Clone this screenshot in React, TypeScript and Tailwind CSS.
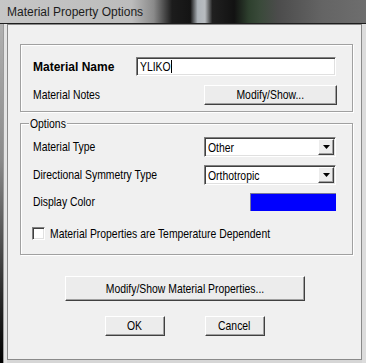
const raised =
  "bg-[#ececec] border border-t-white border-l-white border-r-[#404040] border-b-[#404040] shadow-[inset_-1px_-1px_0_#a0a0a0]";
const sunken =
  "bg-white border border-t-[#808080] border-l-[#808080] border-r-white border-b-white shadow-[inset_1px_1px_0_#404040,inset_-1px_-1px_0_#e0e0e0]";
const etched = "border border-[#a0a0a0] shadow-[1px_1px_0_#fff,inset_1px_1px_0_#fff]";

// the dialog font is a narrow one; squeeze Arial metrics to fit
function N({ children, center }: { children: React.ReactNode; center?: boolean }) {
  return (
    <span className={`inline-block whitespace-nowrap scale-x-[0.8] ${center ? "origin-center" : "origin-left"}`}>
      {children}
    </span>
  );
}

function Combo({ value }: { value: string }) {
  return (
    <div className={`${sunken} w-[132px] h-[20px] flex items-center pl-[3px] pr-[1px]`}>
      <span className="flex-1 leading-none">
        <N>{value}</N>
      </span>
      <div className={`${raised} w-[16px] h-[16px] flex items-center justify-center`}>
        <svg width="7" height="4" viewBox="0 0 7 4">
          <path d="M0 0h7L3.5 4z" fill="#000" />
        </svg>
      </div>
    </div>
  );
}

export default function App() {
  return (
    <div className="w-[366px] h-[363px] overflow-hidden flex flex-col bg-[#d6d6d6] font-['Liberation_Sans',Arial,sans-serif] text-[13px] text-black">
      {/* title bar */}
      <div className="h-[24px] shrink-0 border-b border-[#1e1e1e] flex items-center pl-[7px] bg-[linear-gradient(90deg,#c6c6c6_0%,#bcbcbc_36%,#8a8a8a_42%,#1c1c1c_47%,#141414_52%,#aeb4ba_54%,#b8bcc0_56%,#202020_58%,#121212_64%,#2e402e_68%,#3a4a3a_71%,#4c4c4c_76%,#646464_88%,#6e6e6e_100%)]">
        <span className="text-[12px] text-[#1c1c1c]">Material Property Options</span>
      </div>

      <div className="flex flex-1">
        {/* left frame */}
        <div className="w-[7px] flex shrink-0">
          <div className="w-[3px] bg-[linear-gradient(180deg,#b0b0b0_0%,#8a8a8a_40%,#2a2a2a_80%,#000_100%)]" />
          <div className="w-[1px] bg-[#9a9a9a]" />
          <div className="w-[3px] bg-[#e4e4e4]" />
        </div>

        {/* client */}
        <div className="w-[355px] h-[336px] shrink-0 border border-[#8a8a8a] bg-[#f0f0f0] flex flex-col">
          {/* name group */}
          <div className={`${etched} ml-[12px] mt-[19px] w-[333px] pl-[12px] pr-[16px] pt-[12px] pb-[6px] flex flex-col`}>
            <div className="h-[19px] flex items-center justify-between">
              <span className="font-bold text-[12px]">Material Name</span>
              <div className={`${sunken} w-[200px] h-[19px] flex items-center pl-[3px]`}>
                <span className="leading-none">
                  <N>YLIKO</N>
                </span>
                <span className="-ml-[7px] w-[1px] h-[13px] bg-black" />
              </div>
            </div>
            <div className="mt-[9px] h-[20px] flex items-center justify-between">
              <N>Material Notes</N>
              <button className={`${raised} w-[133px] h-[20px] mr-[-1px] flex items-center justify-center`}>
                <N center>Modify/Show...</N>
              </button>
            </div>
          </div>

          {/* options group */}
          <div className={`${etched} relative ml-[12px] mt-[11px] w-[333px] pl-[12px] pr-[16px] pt-[13px] pb-[14px] flex flex-col`}>
            <span className="absolute left-[8px] top-[-7px] px-[1px] w-[38px] bg-[#f0f0f0] leading-[13px]">
              <N>Options</N>
            </span>
            <div className="h-[20px] flex items-center justify-between">
              <N>Material Type</N>
              <Combo value="Other" />
            </div>
            <div className="mt-[8px] h-[20px] flex items-center justify-between">
              <N>Directional Symmetry Type</N>
              <Combo value="Orthotropic" />
            </div>
            <div className="mt-[8px] h-[18px] flex items-center justify-between">
              <N>Display Color</N>
              <div className="w-[86px] h-[18px] bg-[#0000ff] border-t border-l border-[#7a7a9a]" />
            </div>
            <div className="mt-[16px] h-[13px] flex items-center gap-[5px] -ml-[1px]">
              <div className={`${sunken} w-[13px] h-[13px] shrink-0`} />
              <N>Material Properties are Temperature Dependent</N>
            </div>
          </div>

          <button className={`${raised} self-center mt-[21px] w-[240px] h-[25px] flex items-center justify-center`}>
            <N center>Modify/Show Material Properties...</N>
          </button>

          <div className="mt-[15px] flex justify-center gap-[40px]">
            <button className={`${raised} w-[60px] h-[20px] flex items-center justify-center border-r-[#303030] border-b-[#303030]`}>
              <N center>OK</N>
            </button>
            <button className={`${raised} w-[60px] h-[20px] flex items-center justify-center`}>
              <N center>Cancel</N>
            </button>
          </div>
        </div>

        {/* right frame */}
        <div className="flex-1 bg-[#dcdcdc]" />
      </div>
    </div>
  );
}
